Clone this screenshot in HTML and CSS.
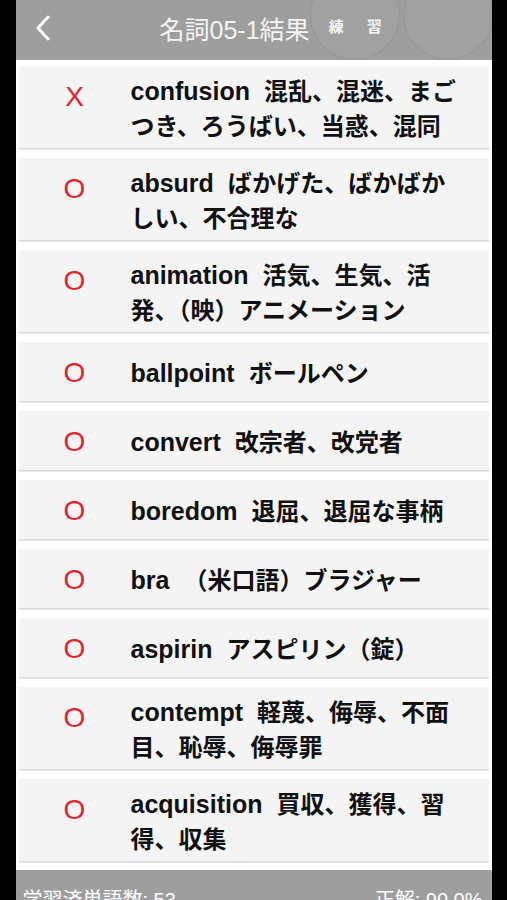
FILE: index.html
```html
<!DOCTYPE html>
<html lang="ja">

<head>
    <meta name="viewport" content="width=device-width, initial-scale=1.0">
    <title>名詞05-1結果</title>
    <link rel="stylesheet" href="styles.css">
</head>
<body>

    <div class="screen">

        <!-- Nav Bar -->
        <div class="navbar">
            <button class="back" aria-label="戻る">
                <svg width="16" height="26" viewBox="0 0 16 26">
                    <path d="M13 2 L3 13 L13 24" fill="none" stroke="#fff" stroke-width="3" stroke-linecap="round" stroke-linejoin="round"/>
                </svg>
            </button>
            <div class="title">名詞05-1結果</div>
            <div class="nav-btn practice">練 習</div>
            <div class="nav-btn other"></div>
        </div>

        <!-- Result List -->
        <div class="list">
            <div class="card">
                <div class="mark">X</div>
                <div class="text"><span class="word">confusion</span>混乱、混迷、まご<br>つき、ろうばい、当惑、混同</div>
            </div>
            <div class="card">
                <div class="mark">O</div>
                <div class="text"><span class="word">absurd</span>ばかげた、ばかばか<br>しい、不合理な</div>
            </div>
            <div class="card">
                <div class="mark">O</div>
                <div class="text"><span class="word">animation</span>活気、生気、活<br>発、（映）アニメーション</div>
            </div>
            <div class="card">
                <div class="mark">O</div>
                <div class="text"><span class="word">ballpoint</span>ボールペン</div>
            </div>
            <div class="card">
                <div class="mark">O</div>
                <div class="text"><span class="word">convert</span>改宗者、改党者</div>
            </div>
            <div class="card">
                <div class="mark">O</div>
                <div class="text"><span class="word">boredom</span>退屈、退屈な事柄</div>
            </div>
            <div class="card">
                <div class="mark">O</div>
                <div class="text"><span class="word">bra</span>（米口語）ブラジャー</div>
            </div>
            <div class="card">
                <div class="mark">O</div>
                <div class="text"><span class="word">aspirin</span>アスピリン（錠）</div>
            </div>
            <div class="card">
                <div class="mark">O</div>
                <div class="text"><span class="word">contempt</span>軽蔑、侮辱、不面<br>目、恥辱、侮辱罪</div>
            </div>
            <div class="card">
                <div class="mark">O</div>
                <div class="text"><span class="word">acquisition</span>買収、獲得、習<br>得、収集</div>
            </div>
        </div>

        <!-- Footer -->
        <div class="footer">
            <span>学習済単語数: 53</span>
            <span>正解: 90.0%</span>
        </div>

    </div>

</body>

</html>
```

FILE: styles.css
```css
/* General */
body {
    margin: 0;
    background-color: #000;
    font-family: "Liberation Sans", "Noto Sans CJK JP", sans-serif;
    overflow: hidden;
}

/* Phone column */
.screen {
    width: 476px;
    margin: 0 auto;
    min-height: 100vh;
    background-color: #fff;
}

/* Nav Bar */
.navbar {
    position: relative;
    height: 60px;
    background-color: #9e9e9e;
    display: flex;
    align-items: center;
    padding-bottom: 5px;
    box-sizing: border-box;
    overflow: hidden;
}

.back {
    background: none;
    border: none;
    padding: 0;
    margin-left: 19px;
    display: flex;
}

.title {
    margin-left: 109px;
    color: #f4f4f4;
    font-size: 25px;
}

/* ripple halos behind the right buttons */
.nav-btn {
    position: absolute;
    top: -30px;
    left: 294px;
    width: 90px;
    height: 90px;
    box-sizing: border-box;
    border-radius: 50%;
    border: 1px solid rgba(0, 0, 0, 0.07);
    background-color: rgba(255, 255, 255, 0.03);
    color: #f4f4f4;
    font-size: 15px;
    font-weight: bold;
    line-height: 20px;
    letter-spacing: 9.5px;
    white-space: nowrap;
    text-align: center;
    padding: 46px 0 0 11px;
}

.nav-btn.other {
    left: 387px;
}

/* Result List */
.list {
    padding: 6px 3px 8px 3px;
    display: flex;
    flex-direction: column;
    gap: 9px;
}

.card {
    display: flex;
    align-items: center;
    min-height: 60px;
    padding: 6px 0;
    box-sizing: border-box;
    background-color: #f4f4f4;
    border-bottom: 1px solid #d9d9d9;
    box-shadow: 0 1px 1px rgba(0, 0, 0, 0.08);
}

.mark {
    align-self: flex-start;
    width: 112px;
    flex-shrink: 0;
    margin-top: 3px;
    text-align: center;
    color: #e3222e;
    font-size: 28px;
    line-height: 44px;
}

.text {
    font-family: "Noto Sans CJK JP", sans-serif;
    font-size: 24px;
    line-height: 35px;
    font-weight: bold;
    color: #111;
}

.word {
    font-family: "Liberation Sans", sans-serif;
    font-size: 25px;
    line-height: 1;
    margin-right: 14px;
}

/* Footer */
.footer {
    height: 40px;
    background-color: #9e9e9e;
    color: #fff;
    font-size: 20px;
    display: flex;
    justify-content: space-between;
    padding: 14px 9px 0 7px;
}
```
